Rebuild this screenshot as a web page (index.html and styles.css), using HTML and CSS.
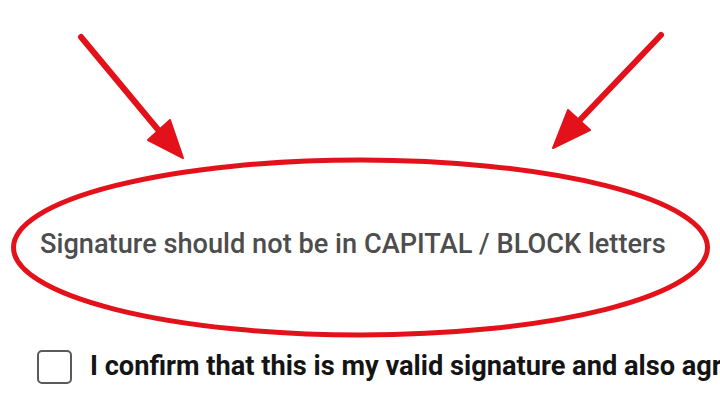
FILE: index.html
```
<!DOCTYPE html>
<html>
<head>
<meta charset="utf-8">
<link rel="stylesheet" href="styles.css">
</head>
<body>
<main class="page">
  <p class="notice">Signature should not be in CAPITAL / BLOCK letters</p>
  <label class="confirm">
    <span class="box"></span>
    <span class="confirm-text">I confirm that this is my valid signature and also agree to the terms</span>
  </label>
  <svg class="marks" width="720" height="404" viewBox="0 0 720 404" aria-hidden="true">
    <ellipse cx="360.5" cy="247.5" rx="347" ry="87.5" fill="none" stroke="#e3121a" stroke-width="5"/>
    <line x1="81" y1="37" x2="160" y2="132" stroke="#e3121a" stroke-width="6" stroke-linecap="round"/>
    <polygon points="183,158 148,140 170,120" fill="#e3121a" stroke="#e3121a" stroke-width="2" stroke-linejoin="round"/>
    <line x1="661" y1="35" x2="578" y2="122" stroke="#e3121a" stroke-width="6" stroke-linecap="round"/>
    <polygon points="553,148 568,110 590,130" fill="#e3121a" stroke="#e3121a" stroke-width="2" stroke-linejoin="round"/>
  </svg>
</main>
</body>
</html>
```
FILE: styles.css
```
html, body {
  margin: 0;
  padding: 0;
  background: #ffffff;
}
.page {
  position: relative;
  width: 720px;
  height: 404px;
  overflow: hidden;
  font-family: Roboto, "Liberation Sans", sans-serif;
}
.notice {
  margin: 0;
  padding: 228px 0 0 40px;
  font-size: 27.2px;
  line-height: 32px;
  font-weight: 500;
  color: #4d4d4d;
  white-space: nowrap;
}
.confirm {
  display: flex;
  align-items: flex-start;
  gap: 18px;
  margin: 89px 0 0 37px;
  white-space: nowrap;
}
.box {
  flex: none;
  width: 31px;
  height: 30px;
  margin-top: 1px;
  border: 2px solid #5a5a5a;
  border-radius: 5px;
}
.confirm-text {
  font-size: 27.2px;
  font-weight: 700;
  color: #141414;
  line-height: 34px;
}
.marks {
  position: absolute;
  left: 0;
  top: 0;
}
```
